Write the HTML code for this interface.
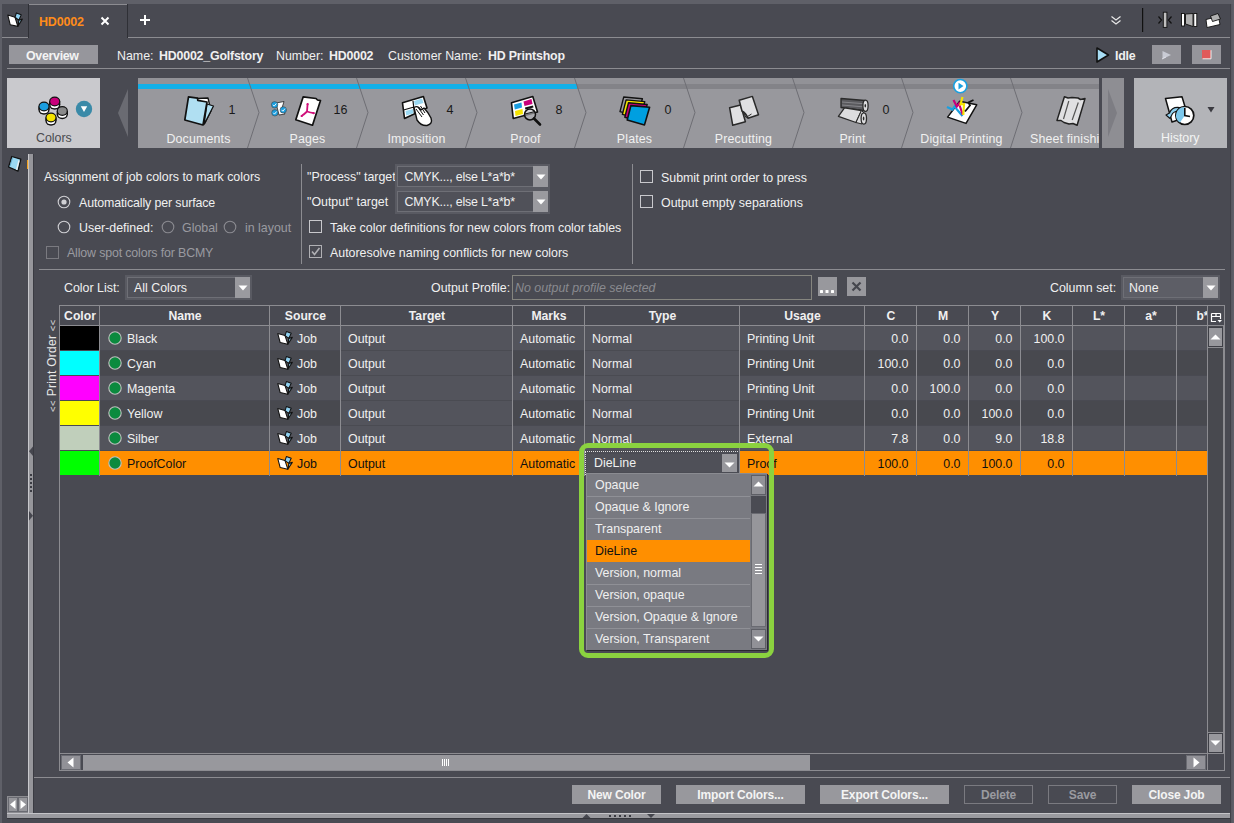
<!DOCTYPE html><html><head><meta charset="utf-8"><style>
html,body{margin:0;padding:0;}
body{width:1234px;height:823px;overflow:hidden;position:relative;background:#494a52;font-family:"Liberation Sans",sans-serif;font-size:12.4px;color:#f0f0f0;}
div{position:absolute;box-sizing:border-box;}
.t{white-space:nowrap;line-height:14px;height:14px;}
.b{font-weight:bold;letter-spacing:-0.15px}
svg{position:absolute;overflow:visible;}

</style></head><body>
<div style="left:0px;top:0px;width:1234px;height:4px;background:#5f6068"></div>
<div style="left:0px;top:0px;width:2px;height:823px;background:#5f6068"></div>
<div style="left:1230px;top:0px;width:4px;height:823px;background:linear-gradient(90deg,#404148 0px,#404148 1px,#55565e 1px,#60616a 4px)"></div>
<div style="left:1230px;top:0px;width:4px;height:4px;background:#5f6068"></div>
<div style="left:2px;top:37px;width:26px;height:1px;background:#8c8c91"></div>
<div style="left:128px;top:37px;width:1102px;height:1px;background:#8c8c91"></div>
<div style="left:29px;top:4px;width:98px;height:1px;background:#8c8c91"></div>
<div style="left:28px;top:4px;width:1px;height:34px;background:#2f3036"></div>
<div style="left:127px;top:4px;width:1px;height:34px;background:#2f3036"></div>
<div class="t" style="left:39px;top:15px;color:#ff8c1a;font-size:12.5px;font-weight:bold;letter-spacing:-0.2px">HD0002</div>
<svg style="left:100px;top:16px" width="10" height="10"><path d="M1.5 1.5L8.5 8.5M8.5 1.5L1.5 8.5" stroke="#fff" stroke-width="2"/></svg>
<svg style="left:139px;top:14px" width="12" height="12"><path d="M6 1V11M1 6H11" stroke="#fff" stroke-width="2"/></svg>
<div style="left:9px;top:45px;width:89px;height:19px;background:#96969c"></div>
<div class="t" style="left:26px;top:49px;font-weight:bold;color:#f4f4f4;letter-spacing:-0.3px">Overview</div>
<div class="t" style="left:117px;top:49px;">Name:</div>
<div class="t" style="left:159px;top:49px;font-weight:bold;letter-spacing:-0.2px">HD0002_Golfstory</div>
<div class="t" style="left:276px;top:49px;">Number:</div>
<div class="t" style="left:329px;top:49px;font-weight:bold;letter-spacing:-0.2px">HD0002</div>
<div class="t" style="left:388px;top:49px;">Customer Name:</div>
<div class="t" style="left:488px;top:49px;font-weight:bold;letter-spacing:-0.2px">HD Printshop</div>
<div style="left:7px;top:68px;width:1223px;height:1px;background:#8c8c91"></div>
<div class="t" style="left:1115px;top:49px;font-weight:bold;letter-spacing:-0.2px">Idle</div>
<div style="left:1152px;top:45px;width:29px;height:19px;background:#95959b"></div>
<div style="left:1192px;top:45px;width:29px;height:19px;background:#95959b"></div>
<div style="left:1202px;top:50px;width:9px;height:9px;background:#e05a5a"></div>
<div style="left:7px;top:78px;width:93px;height:70px;background:#c9c9cd"></div>
<div class="t" style="left:36px;top:131px;color:#4a4a4f">Colors</div>
<div style="left:138px;top:78px;width:961px;height:70px;background:#98989d"></div>
<div style="left:138px;top:78px;width:961px;height:6px;background:#929297"></div>
<div style="left:138px;top:84px;width:439px;height:5px;background:#12b0e8"></div>
<div style="left:577px;top:84px;width:522px;height:5px;background:#838388"></div>
<div class="t" style="left:138px;top:132px;width:121px;text-align:center;color:#f0f0f0;letter-spacing:0.15px">Documents</div>
<div class="t" style="left:247px;top:132px;width:121px;text-align:center;color:#f0f0f0;letter-spacing:0.15px">Pages</div>
<div class="t" style="left:356px;top:132px;width:121px;text-align:center;color:#f0f0f0;letter-spacing:0.15px">Imposition</div>
<div class="t" style="left:465px;top:132px;width:121px;text-align:center;color:#f0f0f0;letter-spacing:0.15px">Proof</div>
<div class="t" style="left:574px;top:132px;width:121px;text-align:center;color:#f0f0f0;letter-spacing:0.15px">Plates</div>
<div class="t" style="left:683px;top:132px;width:121px;text-align:center;color:#f0f0f0;letter-spacing:0.15px">Precutting</div>
<div class="t" style="left:792px;top:132px;width:121px;text-align:center;color:#f0f0f0;letter-spacing:0.15px">Print</div>
<div class="t" style="left:901px;top:132px;width:121px;text-align:center;color:#f0f0f0;letter-spacing:0.15px">Digital Printing</div>
<div class="t" style="left:1030px;top:132px;width:100px;color:#f0f0f0;letter-spacing:0.15px">Sheet finishi</div>
<svg style="left:0;top:0" width="1234" height="823"><path d="M247.5 78L259.0 112.5L247.5 148M356.5 78L368.0 112.5L356.5 148M465.5 78L477.0 112.5L465.5 148M574.5 78L586.0 112.5L574.5 148M683.5 78L695.0 112.5L683.5 148M792.5 78L804.0 112.5L792.5 148M901.5 78L913.0 112.5L901.5 148M1010.5 78L1022.0 112.5L1010.5 148" fill="none" stroke="#6e6e74" stroke-width="1"/></svg>
<div style="left:1102px;top:78px;width:22px;height:70px;background:#8e8e93"></div>
<svg style="left:0;top:0" width="1234" height="823"><path d="M1108 89L1117 113L1108 137Z" fill="#7d7d83"/><path d="M128 89L118 113L128 137Z" fill="#6a6b72"/></svg>
<div style="left:1134px;top:78px;width:93px;height:70px;background:#b3b4b8"></div>
<div class="t" style="left:1161px;top:131px;color:#f4f4f4">History</div>
<div style="left:28px;top:154px;width:5px;height:659px;background:#96969b;border-left:1px solid #c8c8cc"></div>
<div style="left:33px;top:154px;width:1px;height:659px;background:#3a3b42"></div>
<svg style="left:0;top:0" width="1234" height="823"><path d="M33 446.5V456L29 451.3Z" fill="#45464e"/><path d="M29 511V520.5L33 515.8Z" fill="#45464e"/><path d="M30 474h2v2h-2zM30 478h2v2h-2zM30 482h2v2h-2zM30 486h2v2h-2zM30 490h2v2h-2z" fill="#3a3b42"/></svg>
<div class="t" style="left:44px;top:170px;">Assignment of job colors to mark colors</div>
<div class="t" style="left:79px;top:196px;letter-spacing:-0.12px">Automatically per surface</div>
<div class="t" style="left:79px;top:221px;">User-defined:</div>
<div class="t" style="left:182px;top:221px;color:#9a9aa0">Global</div>
<div class="t" style="left:245px;top:221px;color:#9a9aa0">in layout</div>
<div class="t" style="left:67px;top:246px;color:#9a9aa0;letter-spacing:-0.15px">Allow spot colors for BCMY</div>
<div style="left:301px;top:164px;width:1px;height:100px;background:#8c8c91"></div>
<div class="t" style="left:307px;top:170px;">"Process" target</div>
<div class="t" style="left:307px;top:195px;">"Output" target</div>
<div class="t" style="left:330px;top:221px;">Take color definitions for new colors from color tables</div>
<div class="t" style="left:330px;top:246px;">Autoresolve naming conflicts for new colors</div>
<div style="left:632px;top:164px;width:1px;height:100px;background:#8c8c91"></div>
<div class="t" style="left:661px;top:171px;">Submit print order to press</div>
<div class="t" style="left:661px;top:196px;">Output empty separations</div>
<div style="left:39px;top:269px;width:1186px;height:1px;background:#8c8c91"></div>
<div class="t" style="left:64px;top:281px;">Color List:</div>
<div class="t" style="left:431px;top:281px;">Output Profile:</div>
<div class="t" style="left:1050px;top:281px;">Column set:</div>
<div style="left:34px;top:777px;width:1196px;height:1px;background:#8c8c91"></div>
<div style="left:7px;top:813px;width:1223px;height:5px;background:#9a9a9f;border-top:1px solid #c4c4c8"></div>
<svg style="left:57px;top:195px" width="14" height="14"><circle cx="7" cy="7" r="5.8" fill="none" stroke="#d0d0d4" stroke-width="1.1"/><circle cx="7" cy="7" r="2.6" fill="#d0d0d4"/></svg>
<svg style="left:57px;top:220px" width="14" height="14"><circle cx="7" cy="7" r="5.8" fill="none" stroke="#d0d0d4" stroke-width="1.1"/></svg>
<svg style="left:161px;top:220px" width="14" height="14"><circle cx="7" cy="7" r="5.8" fill="none" stroke="#8a8a90" stroke-width="1.1"/></svg>
<svg style="left:223px;top:220px" width="14" height="14"><circle cx="7" cy="7" r="5.8" fill="none" stroke="#8a8a90" stroke-width="1.1"/></svg>
<svg style="left:46px;top:246px" width="14" height="14"><rect x="0.5" y="0.5" width="12" height="12" fill="none" stroke="#7a7a80" stroke-width="1"/></svg>
<svg style="left:309px;top:220px" width="14" height="14"><rect x="0.5" y="0.5" width="12" height="12" fill="none" stroke="#c8c8cc" stroke-width="1"/></svg>
<svg style="left:309px;top:245px" width="14" height="14"><rect x="0.5" y="0.5" width="12" height="12" fill="none" stroke="#b0b0b4" stroke-width="1"/><path d="M3 6.5L5.5 9.5L10.5 3" fill="none" stroke="#b0b0b4" stroke-width="1.6"/></svg>
<svg style="left:640px;top:170px" width="14" height="14"><rect x="0.5" y="0.5" width="12" height="12" fill="none" stroke="#c8c8cc" stroke-width="1"/></svg>
<svg style="left:640px;top:195px" width="14" height="14"><rect x="0.5" y="0.5" width="12" height="12" fill="none" stroke="#c8c8cc" stroke-width="1"/></svg>
<div style="left:395px;top:164px;width:155px;height:50px;background:#595a62"></div>
<div style="left:397px;top:166px;width:151px;height:21px;background:#505159;border:1px solid #6e6f76"></div>
<div style="left:533px;top:166px;width:15px;height:21px;background:#9a9a9f"></div>
<svg style="left:535.5px;top:173.5px" width="10" height="6"><path d="M0.5 0.5H9.5L5 5.5Z" fill="#fff"/></svg>
<div class="t" style="left:404.5px;top:170px;letter-spacing:-0.2px">CMYK..., else L*a*b*</div>
<div style="left:397px;top:191px;width:151px;height:21px;background:#505159;border:1px solid #6e6f76"></div>
<div style="left:533px;top:191px;width:15px;height:21px;background:#9a9a9f"></div>
<svg style="left:535.5px;top:198.5px" width="10" height="6"><path d="M0.5 0.5H9.5L5 5.5Z" fill="#fff"/></svg>
<div class="t" style="left:404.5px;top:195px;letter-spacing:-0.2px">CMYK..., else L*a*b*</div>
<div style="left:125px;top:275px;width:127px;height:25px;background:#595a62"></div>
<div style="left:127px;top:277px;width:123px;height:21px;background:#505159;border:1px solid #6e6f76"></div>
<div style="left:235px;top:277px;width:15px;height:21px;background:#9a9a9f"></div>
<svg style="left:237.5px;top:284.5px" width="10" height="6"><path d="M0.5 0.5H9.5L5 5.5Z" fill="#fff"/></svg>
<div class="t" style="left:134px;top:281px;">All Colors</div>
<div style="left:1121px;top:275px;width:99px;height:25px;background:#595a62"></div>
<div style="left:1123px;top:277px;width:95px;height:21px;background:#5d5e66;border:1px solid #6e6f76"></div>
<div style="left:1203px;top:277px;width:15px;height:21px;background:#9a9a9f"></div>
<svg style="left:1205.5px;top:284.5px" width="10" height="6"><path d="M0.5 0.5H9.5L5 5.5Z" fill="#fff"/></svg>
<div class="t" style="left:1129px;top:281px;">None</div>
<div style="left:512px;top:275px;width:300px;height:25px;border:1px solid #85857f"></div>
<div class="t" style="left:515px;top:281px;font-style:italic;color:#8a8a90">No output profile selected</div>
<div style="left:818px;top:277px;width:19px;height:19px;background:#98989d"></div>
<svg style="left:818px;top:277px" width="19" height="19"><rect x="2" y="13" width="3" height="3" rx="0.6" fill="#fff"/><rect x="7.5" y="13" width="3" height="3" rx="0.6" fill="#fff"/><rect x="13" y="13" width="3" height="3" rx="0.6" fill="#fff"/></svg>
<div style="left:847px;top:277px;width:19px;height:19px;background:#98989d"></div>
<svg style="left:847px;top:277px" width="19" height="19"><path d="M5.5 5.5L13.5 13.5M13.5 5.5L5.5 13.5" stroke="#45464e" stroke-width="2.2"/></svg>
<div style="left:59px;top:305px;width:1166px;height:466px;border:1px solid #8c8c91"></div>
<div class="t b" style="left:60px;top:309px;width:40px;text-align:center;font-size:12.2px;letter-spacing:0px;overflow:hidden">Color</div>
<div class="t b" style="left:100px;top:309px;width:170px;text-align:center;font-size:12.2px;letter-spacing:0px;overflow:hidden">Name</div>
<div class="t b" style="left:270px;top:309px;width:71px;text-align:center;font-size:12.2px;letter-spacing:0px;overflow:hidden">Source</div>
<div class="t b" style="left:341px;top:309px;width:172px;text-align:center;font-size:12.2px;letter-spacing:0px;overflow:hidden">Target</div>
<div class="t b" style="left:513px;top:309px;width:72px;text-align:center;font-size:12.2px;letter-spacing:0px;overflow:hidden">Marks</div>
<div class="t b" style="left:585px;top:309px;width:155px;text-align:center;font-size:12.2px;letter-spacing:0px;overflow:hidden">Type</div>
<div class="t b" style="left:740px;top:309px;width:125px;text-align:center;font-size:12.2px;letter-spacing:0px;overflow:hidden">Usage</div>
<div class="t b" style="left:865px;top:309px;width:52px;text-align:center;font-size:12.2px;letter-spacing:0px;overflow:hidden">C</div>
<div class="t b" style="left:917px;top:309px;width:52px;text-align:center;font-size:12.2px;letter-spacing:0px;overflow:hidden">M</div>
<div class="t b" style="left:969px;top:309px;width:52px;text-align:center;font-size:12.2px;letter-spacing:0px;overflow:hidden">Y</div>
<div class="t b" style="left:1021px;top:309px;width:52px;text-align:center;font-size:12.2px;letter-spacing:0px;overflow:hidden">K</div>
<div class="t b" style="left:1073px;top:309px;width:52px;text-align:center;font-size:12.2px;letter-spacing:0px;overflow:hidden">L*</div>
<div class="t b" style="left:1125px;top:309px;width:52px;text-align:center;font-size:12.2px;letter-spacing:0px;overflow:hidden">a*</div>
<div style="left:1176px;top:309px;width:31px;height:15px;overflow:hidden"><div class="t b" style="left:20.5px;top:0px;font-size:12px">b*</div></div>
<svg style="left:1210px;top:312px" width="13" height="12"><path d="M1.5 1.5H10.5M1.5 4.5H10.5M1.5 1.5V9.5H6M6 1.5V4.5M10.5 1.5V7" fill="none" stroke="#fff" stroke-width="1.2"/><path d="M7.5 8H12L9.75 10.5Z" fill="#fff"/></svg>
<div style="left:60px;top:325px;width:1164px;height:1px;background:#8c8c91"></div>
<div style="left:100px;top:326px;width:169px;height:24px;background:#53545c"></div>
<div style="left:270px;top:326px;width:70px;height:24px;background:#53545c"></div>
<div style="left:341px;top:326px;width:171px;height:24px;background:#53545c"></div>
<div style="left:341px;top:350px;width:171px;height:1px;background:#4a4b52"></div>
<div style="left:513px;top:326px;width:71px;height:24px;background:#53545c"></div>
<div style="left:585px;top:326px;width:154px;height:24px;background:#53545c"></div>
<div style="left:585px;top:350px;width:154px;height:1px;background:#4a4b52"></div>
<div style="left:740px;top:326px;width:124px;height:24px;background:#53545c"></div>
<div style="left:865px;top:326px;width:51px;height:24px;background:#53545c"></div>
<div style="left:917px;top:326px;width:51px;height:24px;background:#53545c"></div>
<div style="left:969px;top:326px;width:51px;height:24px;background:#53545c"></div>
<div style="left:1021px;top:326px;width:51px;height:24px;background:#53545c"></div>
<div style="left:1073px;top:326px;width:51px;height:24px;background:#53545c"></div>
<div style="left:1125px;top:326px;width:51px;height:24px;background:#53545c"></div>
<div style="left:1177px;top:326px;width:30px;height:24px;background:#53545c"></div>
<div style="left:60px;top:326px;width:39px;height:24px;background:#000000"></div>
<svg style="left:108px;top:331px" width="14" height="14"><circle cx="7" cy="7" r="6.2" fill="#0b8a3e" stroke="#c0c0c0" stroke-width="1.1"/></svg>
<div class="t" style="left:127px;top:332px;color:#f0f0f0">Black</div>
<div class="t" style="left:297px;top:332px;color:#f0f0f0">Job</div>
<div class="t" style="left:348px;top:332px;color:#f0f0f0">Output</div>
<div class="t" style="left:520px;top:332px;color:#f0f0f0">Automatic</div>
<div class="t" style="left:592px;top:332px;color:#f0f0f0">Normal</div>
<div class="t" style="left:747px;top:332px;color:#f0f0f0">Printing Unit</div>
<div class="t" style="left:856px;top:332px;width:52.5px;text-align:right;color:#f0f0f0">0.0</div>
<div class="t" style="left:908px;top:332px;width:52.5px;text-align:right;color:#f0f0f0">0.0</div>
<div class="t" style="left:960px;top:332px;width:52.5px;text-align:right;color:#f0f0f0">0.0</div>
<div class="t" style="left:1012px;top:332px;width:52.5px;text-align:right;color:#f0f0f0">100.0</div>
<div style="left:100px;top:351px;width:169px;height:24px;background:#48494f"></div>
<div style="left:270px;top:351px;width:70px;height:24px;background:#48494f"></div>
<div style="left:341px;top:351px;width:171px;height:24px;background:#53545c"></div>
<div style="left:341px;top:375px;width:171px;height:1px;background:#4a4b52"></div>
<div style="left:513px;top:351px;width:71px;height:24px;background:#48494f"></div>
<div style="left:585px;top:351px;width:154px;height:24px;background:#53545c"></div>
<div style="left:585px;top:375px;width:154px;height:1px;background:#4a4b52"></div>
<div style="left:740px;top:351px;width:124px;height:24px;background:#48494f"></div>
<div style="left:865px;top:351px;width:51px;height:24px;background:#48494f"></div>
<div style="left:917px;top:351px;width:51px;height:24px;background:#48494f"></div>
<div style="left:969px;top:351px;width:51px;height:24px;background:#48494f"></div>
<div style="left:1021px;top:351px;width:51px;height:24px;background:#48494f"></div>
<div style="left:1073px;top:351px;width:51px;height:24px;background:#48494f"></div>
<div style="left:1125px;top:351px;width:51px;height:24px;background:#48494f"></div>
<div style="left:1177px;top:351px;width:30px;height:24px;background:#48494f"></div>
<div style="left:60px;top:351px;width:39px;height:24px;background:#00ffff"></div>
<svg style="left:108px;top:356px" width="14" height="14"><circle cx="7" cy="7" r="6.2" fill="#0b8a3e" stroke="#c0c0c0" stroke-width="1.1"/></svg>
<div class="t" style="left:127px;top:357px;color:#f0f0f0">Cyan</div>
<div class="t" style="left:297px;top:357px;color:#f0f0f0">Job</div>
<div class="t" style="left:348px;top:357px;color:#f0f0f0">Output</div>
<div class="t" style="left:520px;top:357px;color:#f0f0f0">Automatic</div>
<div class="t" style="left:592px;top:357px;color:#f0f0f0">Normal</div>
<div class="t" style="left:747px;top:357px;color:#f0f0f0">Printing Unit</div>
<div class="t" style="left:856px;top:357px;width:52.5px;text-align:right;color:#f0f0f0">100.0</div>
<div class="t" style="left:908px;top:357px;width:52.5px;text-align:right;color:#f0f0f0">0.0</div>
<div class="t" style="left:960px;top:357px;width:52.5px;text-align:right;color:#f0f0f0">0.0</div>
<div class="t" style="left:1012px;top:357px;width:52.5px;text-align:right;color:#f0f0f0">0.0</div>
<div style="left:100px;top:376px;width:169px;height:24px;background:#53545c"></div>
<div style="left:270px;top:376px;width:70px;height:24px;background:#53545c"></div>
<div style="left:341px;top:376px;width:171px;height:24px;background:#53545c"></div>
<div style="left:341px;top:400px;width:171px;height:1px;background:#4a4b52"></div>
<div style="left:513px;top:376px;width:71px;height:24px;background:#53545c"></div>
<div style="left:585px;top:376px;width:154px;height:24px;background:#53545c"></div>
<div style="left:585px;top:400px;width:154px;height:1px;background:#4a4b52"></div>
<div style="left:740px;top:376px;width:124px;height:24px;background:#53545c"></div>
<div style="left:865px;top:376px;width:51px;height:24px;background:#53545c"></div>
<div style="left:917px;top:376px;width:51px;height:24px;background:#53545c"></div>
<div style="left:969px;top:376px;width:51px;height:24px;background:#53545c"></div>
<div style="left:1021px;top:376px;width:51px;height:24px;background:#53545c"></div>
<div style="left:1073px;top:376px;width:51px;height:24px;background:#53545c"></div>
<div style="left:1125px;top:376px;width:51px;height:24px;background:#53545c"></div>
<div style="left:1177px;top:376px;width:30px;height:24px;background:#53545c"></div>
<div style="left:60px;top:376px;width:39px;height:24px;background:#ff00ff"></div>
<svg style="left:108px;top:381px" width="14" height="14"><circle cx="7" cy="7" r="6.2" fill="#0b8a3e" stroke="#c0c0c0" stroke-width="1.1"/></svg>
<div class="t" style="left:127px;top:382px;color:#f0f0f0">Magenta</div>
<div class="t" style="left:297px;top:382px;color:#f0f0f0">Job</div>
<div class="t" style="left:348px;top:382px;color:#f0f0f0">Output</div>
<div class="t" style="left:520px;top:382px;color:#f0f0f0">Automatic</div>
<div class="t" style="left:592px;top:382px;color:#f0f0f0">Normal</div>
<div class="t" style="left:747px;top:382px;color:#f0f0f0">Printing Unit</div>
<div class="t" style="left:856px;top:382px;width:52.5px;text-align:right;color:#f0f0f0">0.0</div>
<div class="t" style="left:908px;top:382px;width:52.5px;text-align:right;color:#f0f0f0">100.0</div>
<div class="t" style="left:960px;top:382px;width:52.5px;text-align:right;color:#f0f0f0">0.0</div>
<div class="t" style="left:1012px;top:382px;width:52.5px;text-align:right;color:#f0f0f0">0.0</div>
<div style="left:100px;top:401px;width:169px;height:24px;background:#48494f"></div>
<div style="left:270px;top:401px;width:70px;height:24px;background:#48494f"></div>
<div style="left:341px;top:401px;width:171px;height:24px;background:#53545c"></div>
<div style="left:341px;top:425px;width:171px;height:1px;background:#4a4b52"></div>
<div style="left:513px;top:401px;width:71px;height:24px;background:#48494f"></div>
<div style="left:585px;top:401px;width:154px;height:24px;background:#53545c"></div>
<div style="left:585px;top:425px;width:154px;height:1px;background:#4a4b52"></div>
<div style="left:740px;top:401px;width:124px;height:24px;background:#48494f"></div>
<div style="left:865px;top:401px;width:51px;height:24px;background:#48494f"></div>
<div style="left:917px;top:401px;width:51px;height:24px;background:#48494f"></div>
<div style="left:969px;top:401px;width:51px;height:24px;background:#48494f"></div>
<div style="left:1021px;top:401px;width:51px;height:24px;background:#48494f"></div>
<div style="left:1073px;top:401px;width:51px;height:24px;background:#48494f"></div>
<div style="left:1125px;top:401px;width:51px;height:24px;background:#48494f"></div>
<div style="left:1177px;top:401px;width:30px;height:24px;background:#48494f"></div>
<div style="left:60px;top:401px;width:39px;height:24px;background:#ffff00"></div>
<svg style="left:108px;top:406px" width="14" height="14"><circle cx="7" cy="7" r="6.2" fill="#0b8a3e" stroke="#c0c0c0" stroke-width="1.1"/></svg>
<div class="t" style="left:127px;top:407px;color:#f0f0f0">Yellow</div>
<div class="t" style="left:297px;top:407px;color:#f0f0f0">Job</div>
<div class="t" style="left:348px;top:407px;color:#f0f0f0">Output</div>
<div class="t" style="left:520px;top:407px;color:#f0f0f0">Automatic</div>
<div class="t" style="left:592px;top:407px;color:#f0f0f0">Normal</div>
<div class="t" style="left:747px;top:407px;color:#f0f0f0">Printing Unit</div>
<div class="t" style="left:856px;top:407px;width:52.5px;text-align:right;color:#f0f0f0">0.0</div>
<div class="t" style="left:908px;top:407px;width:52.5px;text-align:right;color:#f0f0f0">0.0</div>
<div class="t" style="left:960px;top:407px;width:52.5px;text-align:right;color:#f0f0f0">100.0</div>
<div class="t" style="left:1012px;top:407px;width:52.5px;text-align:right;color:#f0f0f0">0.0</div>
<div style="left:100px;top:426px;width:169px;height:24px;background:#53545c"></div>
<div style="left:270px;top:426px;width:70px;height:24px;background:#53545c"></div>
<div style="left:341px;top:426px;width:171px;height:24px;background:#53545c"></div>
<div style="left:341px;top:450px;width:171px;height:1px;background:#4a4b52"></div>
<div style="left:513px;top:426px;width:71px;height:24px;background:#53545c"></div>
<div style="left:585px;top:426px;width:154px;height:24px;background:#53545c"></div>
<div style="left:585px;top:450px;width:154px;height:1px;background:#4a4b52"></div>
<div style="left:740px;top:426px;width:124px;height:24px;background:#53545c"></div>
<div style="left:865px;top:426px;width:51px;height:24px;background:#53545c"></div>
<div style="left:917px;top:426px;width:51px;height:24px;background:#53545c"></div>
<div style="left:969px;top:426px;width:51px;height:24px;background:#53545c"></div>
<div style="left:1021px;top:426px;width:51px;height:24px;background:#53545c"></div>
<div style="left:1073px;top:426px;width:51px;height:24px;background:#53545c"></div>
<div style="left:1125px;top:426px;width:51px;height:24px;background:#53545c"></div>
<div style="left:1177px;top:426px;width:30px;height:24px;background:#53545c"></div>
<div style="left:60px;top:426px;width:39px;height:24px;background:#c0cfbb"></div>
<svg style="left:108px;top:431px" width="14" height="14"><circle cx="7" cy="7" r="6.2" fill="#0b8a3e" stroke="#c0c0c0" stroke-width="1.1"/></svg>
<div class="t" style="left:127px;top:432px;color:#f0f0f0">Silber</div>
<div class="t" style="left:297px;top:432px;color:#f0f0f0">Job</div>
<div class="t" style="left:348px;top:432px;color:#f0f0f0">Output</div>
<div class="t" style="left:520px;top:432px;color:#f0f0f0">Automatic</div>
<div class="t" style="left:592px;top:432px;color:#f0f0f0">Normal</div>
<div class="t" style="left:747px;top:432px;color:#f0f0f0">External</div>
<div class="t" style="left:856px;top:432px;width:52.5px;text-align:right;color:#f0f0f0">7.8</div>
<div class="t" style="left:908px;top:432px;width:52.5px;text-align:right;color:#f0f0f0">0.0</div>
<div class="t" style="left:960px;top:432px;width:52.5px;text-align:right;color:#f0f0f0">9.0</div>
<div class="t" style="left:1012px;top:432px;width:52.5px;text-align:right;color:#f0f0f0">18.8</div>
<div style="left:100px;top:451px;width:169px;height:24px;background:#ff8f00"></div>
<div style="left:270px;top:451px;width:70px;height:24px;background:#ff8f00"></div>
<div style="left:341px;top:451px;width:171px;height:24px;background:#ff8f00"></div>
<div style="left:513px;top:451px;width:71px;height:24px;background:#ff8f00"></div>
<div style="left:585px;top:451px;width:154px;height:24px;background:#4b4c54"></div>
<div style="left:740px;top:451px;width:124px;height:24px;background:#ff8f00"></div>
<div style="left:865px;top:451px;width:51px;height:24px;background:#ff8f00"></div>
<div style="left:917px;top:451px;width:51px;height:24px;background:#ff8f00"></div>
<div style="left:969px;top:451px;width:51px;height:24px;background:#ff8f00"></div>
<div style="left:1021px;top:451px;width:51px;height:24px;background:#ff8f00"></div>
<div style="left:1073px;top:451px;width:51px;height:24px;background:#ff8f00"></div>
<div style="left:1125px;top:451px;width:51px;height:24px;background:#ff8f00"></div>
<div style="left:1177px;top:451px;width:30px;height:24px;background:#ff8f00"></div>
<div style="left:60px;top:451px;width:39px;height:24px;background:#00ff00"></div>
<svg style="left:108px;top:456px" width="14" height="14"><circle cx="7" cy="7" r="6.2" fill="#0b8a3e" stroke="#c0c0c0" stroke-width="1.1"/></svg>
<div class="t" style="left:127px;top:457px;color:#101010">ProofColor</div>
<div class="t" style="left:297px;top:457px;color:#101010">Job</div>
<div class="t" style="left:348px;top:457px;color:#101010">Output</div>
<div class="t" style="left:520px;top:457px;color:#101010">Automatic</div>
<div class="t" style="left:747px;top:457px;color:#101010">Proof</div>
<div class="t" style="left:856px;top:457px;width:52.5px;text-align:right;color:#101010">100.0</div>
<div class="t" style="left:908px;top:457px;width:52.5px;text-align:right;color:#101010">0.0</div>
<div class="t" style="left:960px;top:457px;width:52.5px;text-align:right;color:#101010">100.0</div>
<div class="t" style="left:1012px;top:457px;width:52.5px;text-align:right;color:#101010">0.0</div>
<div style="left:99px;top:306px;width:1px;height:170px;background:#8c8c91"></div>
<div style="left:269px;top:306px;width:1px;height:170px;background:#8c8c91"></div>
<div style="left:340px;top:306px;width:1px;height:170px;background:#8c8c91"></div>
<div style="left:512px;top:306px;width:1px;height:170px;background:#8c8c91"></div>
<div style="left:584px;top:306px;width:1px;height:170px;background:#8c8c91"></div>
<div style="left:739px;top:306px;width:1px;height:170px;background:#8c8c91"></div>
<div style="left:864px;top:306px;width:1px;height:170px;background:#8c8c91"></div>
<div style="left:916px;top:306px;width:1px;height:170px;background:#8c8c91"></div>
<div style="left:968px;top:306px;width:1px;height:170px;background:#8c8c91"></div>
<div style="left:1020px;top:306px;width:1px;height:170px;background:#8c8c91"></div>
<div style="left:1072px;top:306px;width:1px;height:170px;background:#8c8c91"></div>
<div style="left:1124px;top:306px;width:1px;height:170px;background:#8c8c91"></div>
<div style="left:1176px;top:306px;width:1px;height:170px;background:#8c8c91"></div>
<div style="left:1207px;top:306px;width:1px;height:464px;background:#8c8c91"></div>
<div style="left:1207px;top:326px;width:18px;height:428px;background:#48494f;border-left:1px solid #8c8c91;border-right:2px solid #8c8c91"></div>
<div style="left:1208px;top:347px;width:15px;height:1px;background:#8c8c91"></div>
<div style="left:1208px;top:732px;width:15px;height:1px;background:#8c8c91"></div>
<div style="left:1208px;top:327px;width:15px;height:20px;background:#98989d;border:1px solid #3e3f46"></div>
<svg style="left:1210px;top:334px" width="11" height="6"><path d="M0.5 5.5H10.5L5.5 0.5Z" fill="#fff"/></svg>
<div style="left:1208px;top:733px;width:15px;height:20px;background:#98989d;border:1px solid #3e3f46"></div>
<svg style="left:1210px;top:740px" width="11" height="6"><path d="M0.5 0.5H10.5L5.5 5.5Z" fill="#fff"/></svg>
<div style="left:1207px;top:753px;width:18px;height:18px;border:1px solid #8c8c91"></div>
<div style="left:59px;top:753px;width:1149px;height:18px;border:1px solid #8c8c91"></div>
<div style="left:61px;top:755px;width:20px;height:15px;background:#919197;border:1px solid #6a6b72"></div>
<svg style="left:67px;top:757px" width="7" height="11"><path d="M6.5 0.5V10.5L0.5 5.5Z" fill="#fff"/></svg>
<div style="left:83px;top:755px;width:727px;height:15px;background:#98989d"></div>
<svg style="left:441px;top:758px" width="10" height="9"><path d="M1.5 1V8M3.5 1V8M5.5 1V8M7.5 1V8" stroke="#fff" stroke-width="1"/></svg>
<div style="left:1186px;top:755px;width:20px;height:15px;background:#919197;border:1px solid #6a6b72"></div>
<svg style="left:1193px;top:757px" width="7" height="11"><path d="M0.5 0.5V10.5L6.5 5.5Z" fill="#fff"/></svg>
<div style="left:572px;top:785px;width:89px;height:19px;background:#98989d"></div>
<div class="t b" style="left:572px;top:788px;width:89px;text-align:center;color:#f4f4f4;font-size:12px">New Color</div>
<div style="left:676px;top:785px;width:129px;height:19px;background:#98989d"></div>
<div class="t b" style="left:676px;top:788px;width:129px;text-align:center;color:#f4f4f4;font-size:12px">Import Colors...</div>
<div style="left:820px;top:785px;width:129px;height:19px;background:#98989d"></div>
<div class="t b" style="left:820px;top:788px;width:129px;text-align:center;color:#f4f4f4;font-size:12px">Export Colors...</div>
<div style="left:964px;top:785px;width:69px;height:19px;border:1px solid #7a7a80"></div>
<div class="t b" style="left:964px;top:788px;width:69px;text-align:center;color:#9a9aa0;font-size:12px">Delete</div>
<div style="left:1048px;top:785px;width:69px;height:19px;border:1px solid #7a7a80"></div>
<div class="t b" style="left:1048px;top:788px;width:69px;text-align:center;color:#9a9aa0;font-size:12px">Save</div>
<div style="left:1132px;top:785px;width:89px;height:19px;background:#98989d"></div>
<div class="t b" style="left:1132px;top:788px;width:89px;text-align:center;color:#f4f4f4;font-size:12px">Close Job</div>
<div style="left:7px;top:796px;width:21px;height:17px;background:#8c8c91"></div>
<div style="left:8px;top:797px;width:10px;height:15px;background:#96969b;border:1px solid #6a6b72"></div>
<div style="left:18px;top:797px;width:10px;height:15px;background:#96969b;border:1px solid #6a6b72"></div>
<svg style="left:0;top:0" width="1234" height="823"><path d="M15.5 800V809L10 804.5Z" fill="#fff"/><path d="M20.5 800V809L26 804.5Z" fill="#fff"/></svg>
<div style="left:7px;top:818px;width:1223px;height:1px;background:#35363c"></div>
<svg style="left:0;top:0" width="1234" height="823"><path d="M582.5 818L586.5 814L590.5 818Z" fill="#45464e"/><path d="M647 814H655L651 818Z" fill="#45464e"/><path d="M609 815h2v2h-2zM614 815h2v2h-2zM619 815h2v2h-2zM624 815h2v2h-2zM629 815h2v2h-2z" fill="#3a3b42"/></svg>
<div class="t" style="left:5.5px;top:359px;width:92px;text-align:center;transform:rotate(-90deg);font-size:12px;letter-spacing:0.25px;color:#e8e8e8"><span style="font-size:9.5px;letter-spacing:0.5px">&lt;&lt;</span> Print Order <span style="font-size:9.5px;letter-spacing:0.5px">&lt;&lt;</span></div>
<div style="left:579px;top:443px;width:195px;height:215px;border:5px solid #8bd23f;border-radius:9px"></div>
<div style="left:585px;top:451px;width:153px;height:24px;border:1px dotted #e0e0e0;border-right:none;border-bottom:none"></div>
<div style="left:587px;top:454px;width:135px;height:18px;background:#4f5058"></div>
<div style="left:722px;top:454px;width:15px;height:18px;background:#98989d"></div>
<svg style="left:724px;top:462px" width="11" height="6"><path d="M0.5 0.5H10.5L5.5 5.5Z" fill="#fff"/></svg>
<div class="t" style="left:594px;top:456px;">DieLine</div>
<div style="left:586px;top:473px;width:181px;height:177px;background:#8a8b91"></div>
<div style="left:767px;top:474px;width:1px;height:177px;background:#2a2b30"></div>
<div style="left:587px;top:650px;width:181px;height:1px;background:#2a2b30"></div>
<div style="left:587px;top:474px;width:163px;height:22px;background:#797a81"></div>
<div class="t" style="left:595px;top:478px;color:#f0f0f0">Opaque</div>
<div style="left:587px;top:496px;width:163px;height:22px;background:#797a81"></div>
<div style="left:587px;top:496px;width:163px;height:1px;background:#8f9096"></div>
<div class="t" style="left:595px;top:500px;color:#f0f0f0">Opaque &amp; Ignore</div>
<div style="left:587px;top:518px;width:163px;height:22px;background:#797a81"></div>
<div style="left:587px;top:518px;width:163px;height:1px;background:#8f9096"></div>
<div class="t" style="left:595px;top:522px;color:#f0f0f0">Transparent</div>
<div style="left:587px;top:540px;width:163px;height:22px;background:#ff8f00"></div>
<div class="t" style="left:595px;top:544px;color:#101010">DieLine</div>
<div style="left:587px;top:562px;width:163px;height:22px;background:#797a81"></div>
<div class="t" style="left:595px;top:566px;color:#f0f0f0">Version, normal</div>
<div style="left:587px;top:584px;width:163px;height:22px;background:#797a81"></div>
<div style="left:587px;top:584px;width:163px;height:1px;background:#8f9096"></div>
<div class="t" style="left:595px;top:588px;color:#f0f0f0">Version, opaque</div>
<div style="left:587px;top:606px;width:163px;height:22px;background:#797a81"></div>
<div style="left:587px;top:606px;width:163px;height:1px;background:#8f9096"></div>
<div class="t" style="left:595px;top:610px;color:#f0f0f0">Version, Opaque &amp; Ignore</div>
<div style="left:587px;top:628px;width:163px;height:22px;background:#797a81"></div>
<div style="left:587px;top:628px;width:163px;height:1px;background:#8f9096"></div>
<div class="t" style="left:595px;top:632px;color:#f0f0f0">Version, Transparent</div>
<div style="left:750px;top:474px;width:17px;height:176px;background:#797a81"></div>
<div style="left:751px;top:475px;width:15px;height:20px;background:#919197;border:1px solid #5e5f66"></div>
<svg style="left:753px;top:481px" width="11" height="6"><path d="M0.5 5.5H10.5L5.5 0.5Z" fill="#fff"/></svg>
<div style="left:751px;top:496px;width:15px;height:17px;background:#4a4b53"></div>
<div style="left:751px;top:513px;width:15px;height:114px;background:#96969b;border:1px solid #6a6b72"></div>
<svg style="left:754px;top:563px" width="9" height="11"><path d="M1 1.5H8M1 4.5H8M1 7.5H8M1 10.5H8" stroke="#fff" stroke-width="1"/></svg>
<div style="left:751px;top:629px;width:15px;height:20px;background:#919197;border:1px solid #5e5f66"></div>
<svg style="left:753px;top:636px" width="11" height="6"><path d="M0.5 0.5H10.5L5.5 5.5Z" fill="#fff"/></svg>
<svg style="left:0;top:0" width="1234" height="823"><g transform="translate(7,12.3) scale(1.0,1.07)"><g transform="translate(0,0)"><path d="M0.8 2.6L8 4.6L10.8 13.2L3.2 11.6Z" fill="#fff" stroke="#111" stroke-width="1.05" stroke-linejoin="round"/><path d="M8 4.6L9.4 0.6L14.2 2.3L11.9 7.4Z" fill="#8fd0f0" stroke="#111" stroke-width="1.05" stroke-linejoin="round"/><path d="M11.9 7.4L15.3 6.4L10.8 13.2Z" fill="#8fd0f0" stroke="#111" stroke-width="1.1" stroke-linejoin="round"/></g></g><g transform="translate(277,331)"><path d="M0.8 2.6L8 4.6L10.8 13.2L3.2 11.6Z" fill="#fff" stroke="#111" stroke-width="1.05" stroke-linejoin="round"/><path d="M8 4.6L9.4 0.6L14.2 2.3L11.9 7.4Z" fill="#8fd0f0" stroke="#111" stroke-width="1.05" stroke-linejoin="round"/><path d="M11.9 7.4L15.3 6.4L10.8 13.2Z" fill="#8fd0f0" stroke="#111" stroke-width="1.1" stroke-linejoin="round"/></g><g transform="translate(277,356)"><path d="M0.8 2.6L8 4.6L10.8 13.2L3.2 11.6Z" fill="#fff" stroke="#111" stroke-width="1.05" stroke-linejoin="round"/><path d="M8 4.6L9.4 0.6L14.2 2.3L11.9 7.4Z" fill="#8fd0f0" stroke="#111" stroke-width="1.05" stroke-linejoin="round"/><path d="M11.9 7.4L15.3 6.4L10.8 13.2Z" fill="#8fd0f0" stroke="#111" stroke-width="1.1" stroke-linejoin="round"/></g><g transform="translate(277,381)"><path d="M0.8 2.6L8 4.6L10.8 13.2L3.2 11.6Z" fill="#fff" stroke="#111" stroke-width="1.05" stroke-linejoin="round"/><path d="M8 4.6L9.4 0.6L14.2 2.3L11.9 7.4Z" fill="#8fd0f0" stroke="#111" stroke-width="1.05" stroke-linejoin="round"/><path d="M11.9 7.4L15.3 6.4L10.8 13.2Z" fill="#8fd0f0" stroke="#111" stroke-width="1.1" stroke-linejoin="round"/></g><g transform="translate(277,406)"><path d="M0.8 2.6L8 4.6L10.8 13.2L3.2 11.6Z" fill="#fff" stroke="#111" stroke-width="1.05" stroke-linejoin="round"/><path d="M8 4.6L9.4 0.6L14.2 2.3L11.9 7.4Z" fill="#8fd0f0" stroke="#111" stroke-width="1.05" stroke-linejoin="round"/><path d="M11.9 7.4L15.3 6.4L10.8 13.2Z" fill="#8fd0f0" stroke="#111" stroke-width="1.1" stroke-linejoin="round"/></g><g transform="translate(277,431)"><path d="M0.8 2.6L8 4.6L10.8 13.2L3.2 11.6Z" fill="#fff" stroke="#111" stroke-width="1.05" stroke-linejoin="round"/><path d="M8 4.6L9.4 0.6L14.2 2.3L11.9 7.4Z" fill="#8fd0f0" stroke="#111" stroke-width="1.05" stroke-linejoin="round"/><path d="M11.9 7.4L15.3 6.4L10.8 13.2Z" fill="#8fd0f0" stroke="#111" stroke-width="1.1" stroke-linejoin="round"/></g><g transform="translate(277,456)"><path d="M0.8 2.6L8 4.6L10.8 13.2L3.2 11.6Z" fill="#fff" stroke="#111" stroke-width="1.05" stroke-linejoin="round"/><path d="M8 4.6L9.4 0.6L14.2 2.3L11.9 7.4Z" fill="#8fd0f0" stroke="#111" stroke-width="1.05" stroke-linejoin="round"/><path d="M11.9 7.4L15.3 6.4L10.8 13.2Z" fill="#8fd0f0" stroke="#111" stroke-width="1.1" stroke-linejoin="round"/></g><path d="M11.8 156.5L20.8 159.2L18 171.2L8.6 167Z" fill="#9ad8f2" stroke="#111" stroke-width="1.3" stroke-linejoin="round"/><path d="M19 160.5L16.6 169.8" stroke="#f0f0f0" stroke-width="1.3"/><path d="M12.5 158L10 166" stroke="#5aa8cc" stroke-width="0.8"/><rect x="27" y="160" width="1.2" height="9" fill="#f0a020"/><ellipse cx="54.7" cy="104.7" rx="5.6" ry="5" fill="#111"/><rect x="49.1" y="101.5" width="11.2" height="3.2" fill="#111"/><ellipse cx="54.7" cy="104.7" rx="4.2" ry="3.6" fill="#fff"/><ellipse cx="54.7" cy="101.5" rx="5.6" ry="5" fill="#111"/><ellipse cx="54.7" cy="101.5" rx="4.4" ry="3.7" fill="#c8007a"/><ellipse cx="44" cy="109.7" rx="5.6" ry="5" fill="#111"/><rect x="38.4" y="106.5" width="11.2" height="3.2" fill="#111"/><ellipse cx="44" cy="109.7" rx="4.2" ry="3.6" fill="#fff"/><ellipse cx="44" cy="106.5" rx="5.6" ry="5" fill="#111"/><ellipse cx="44" cy="106.5" rx="4.4" ry="3.7" fill="#1a9ee0"/><ellipse cx="62.3" cy="114.2" rx="5.6" ry="5" fill="#111"/><rect x="56.699999999999996" y="111" width="11.2" height="3.2" fill="#111"/><ellipse cx="62.3" cy="114.2" rx="4.2" ry="3.6" fill="#fff"/><ellipse cx="62.3" cy="111" rx="5.6" ry="5" fill="#111"/><ellipse cx="62.3" cy="111" rx="4.4" ry="3.7" fill="#8a8a8a"/><ellipse cx="51" cy="120.7" rx="5.6" ry="5" fill="#111"/><rect x="45.4" y="117.5" width="11.2" height="3.2" fill="#111"/><ellipse cx="51" cy="120.7" rx="4.2" ry="3.6" fill="#fff"/><ellipse cx="51" cy="117.5" rx="5.6" ry="5" fill="#111"/><ellipse cx="51" cy="117.5" rx="4.4" ry="3.7" fill="#f5e400"/><circle cx="84" cy="109" r="8.2" fill="#3a8aa8"/><path d="M80.8 106.3H87.2L84 112Z" fill="#fff"/><path d="M197 98.5L208 98L211 111L205 123Z" fill="#fff" stroke="#111" stroke-width="1.3" stroke-linejoin="round"/><path d="M207 104L213.5 106L204 124.5Z" fill="#b0dff2" stroke="#111" stroke-width="1.3" stroke-linejoin="round"/><path d="M188.5 96.8L197.5 98.2L197.8 100.3L207 102L203 125L184.8 120Z" fill="#b0dff2" stroke="#111" stroke-width="1.7" stroke-linejoin="round"/><path d="M276 103L284 101.5L282 108L285 114L279 115Z" fill="#fff" stroke="#222" stroke-width="0.8"/><circle cx="274.6" cy="104.8" r="3.2" fill="#1a9ee0" stroke="#444" stroke-width="0.6"/><path d="M273.0 104.8L274.20000000000005 106.1L276.3 103.5" fill="none" stroke="#fff" stroke-width="0.9"/><circle cx="274.9" cy="112.8" r="3.2" fill="#1a9ee0" stroke="#444" stroke-width="0.6"/><path d="M273.29999999999995 112.8L274.5 114.1L276.59999999999997 111.5" fill="none" stroke="#fff" stroke-width="0.9"/><circle cx="283.3" cy="109.9" r="3.2" fill="#1a9ee0" stroke="#444" stroke-width="0.6"/><path d="M281.7 109.9L282.90000000000003 111.2L285.0 108.60000000000001" fill="none" stroke="#fff" stroke-width="0.9"/><path d="M303.2 96.8L316 98.5L317.5 100L320.5 100.6L312.5 125.2L295.8 119.8Z" fill="#fff" stroke="#111" stroke-width="1.7" stroke-linejoin="round"/><path d="M307.6 104L307 111.5Q304 114.5 301.5 116M307 111.5Q310.5 112.8 313.8 113.2" fill="none" stroke="#d0107a" stroke-width="1.8" stroke-linecap="round"/><circle cx="307.6" cy="104.3" r="1.1" fill="#d0107a"/><circle cx="301.8" cy="116" r="1.1" fill="#d0107a"/><circle cx="313.6" cy="113.2" r="1.1" fill="#d0107a"/><path d="M402.5 102.8L423.4 96.5L427 108L404.5 118.5Z" fill="#fff" stroke="#111" stroke-width="1.6" stroke-linejoin="round"/><path d="M404.5 104L412 102L412.5 107L405.2 109Z" fill="#fff"/><path d="M414 101L422 98.5L423.5 103L414.8 105.5Z" fill="#9ad8f2"/><path d="M405.5 111L413 109L413.5 113.2L406.3 115.5Z" fill="#9ad8f2"/><path d="M403.5 110L414 107M413 101L414.5 114" stroke="#111" stroke-width="1.2"/><path d="M414 107.5Q418 105 421 110L424 108Q428 112 431 118Q433 124 427 125.5Q421 126 417 120Z" fill="#fff" stroke="#111" stroke-width="1.4" stroke-linejoin="round"/><path d="M416 109L422 117M418 107.3L423.5 115M420.5 106L425 113" stroke="#111" stroke-width="1"/><path d="M511.5 102.8L532.8 96.5L537.5 112L513.2 118.4Z" fill="#fff" stroke="#111" stroke-width="1.6" stroke-linejoin="round"/><path d="M514 104.5L521.5 102.5L522 107.5L514.8 109.5Z" fill="#1a9ee0"/><path d="M523.5 101.5L531.5 99L532.5 104L524.5 106Z" fill="#c8007a"/><path d="M515 111L522.5 109L523 114L515.5 116Z" fill="#f5e400"/><path d="M525 107.5L533 105.5L533.5 107.5L525.3 109.5Z" fill="#111"/><circle cx="530" cy="114.5" r="5.5" fill="#b8b8bc" fill-opacity="0.6" stroke="#111" stroke-width="1.5"/><path d="M534 118.5L540 124.5" stroke="#111" stroke-width="2.6" stroke-linecap="round"/><path d="M525 114L535 111.5" stroke="#111" stroke-width="1"/><path d="M623.6999999999999 97.05L642.4 98.75L637.3 116.35000000000001L620.0 111.55Z" fill="#9a9a9f" stroke="#111" stroke-width="1.4" stroke-linejoin="round"/><path d="M626.1 99.89999999999999L644.8000000000001 101.6L639.7 119.2L622.4000000000001 114.39999999999999Z" fill="#f5e400" stroke="#111" stroke-width="1.4" stroke-linejoin="round"/><path d="M628.5 102.75L647.2 104.45L642.1 122.05000000000001L624.8000000000001 117.25Z" fill="#c8007a" stroke="#111" stroke-width="1.4" stroke-linejoin="round"/><path d="M630.9 105.6L649.6 107.3L644.5 124.9L627.2 120.1Z" fill="#009fe0" stroke="#111" stroke-width="1.6" stroke-linejoin="round"/><path d="M729.6 107.7L740.6 105.1L745.4 121.7L732.7 125.2Z" fill="#e0e0e2" stroke="#2a2a2a" stroke-width="1.5" stroke-linejoin="round"/><path d="M739.2 100.3L752.4 96.4L758.5 114.7L748 118.2Q746 113 742 111Z" fill="#e0e0e2" stroke="#2a2a2a" stroke-width="1.5" stroke-linejoin="round"/><path d="M743 112L746 117.5L751.5 114" fill="none" stroke="#2a2a2a" stroke-width="1"/><path d="M841 98.5L865 100.5L866 111L841 107.5Z" fill="#5a5a5e" stroke="#2a2a2a" stroke-width="1.3" stroke-linejoin="round"/><path d="M842 102L865 103.8M842 105L865 107" stroke="#8a8a8e" stroke-width="0.9"/><ellipse cx="865.5" cy="105.8" rx="2.6" ry="5.6" fill="#dcdcde" stroke="#2a2a2a" stroke-width="1.3"/><ellipse cx="865.3" cy="105.8" rx="0.8" ry="1.8" fill="#2a2a2a"/><path d="M838.4 116.3L844.5 107.8L861.5 110.5L856 122.5Z" fill="#dcdcde" stroke="#2a2a2a" stroke-width="1.3" stroke-linejoin="round"/><path d="M856 122.5L861.5 110.5L864 113L862 124Z" fill="#dcdcde" stroke="#2a2a2a" stroke-width="1" stroke-linejoin="round"/><ellipse cx="863.8" cy="118.5" rx="2.7" ry="5.6" fill="#dcdcde" stroke="#2a2a2a" stroke-width="1.3"/><ellipse cx="863.6" cy="118.5" rx="0.8" ry="2" fill="#2a2a2a"/><circle cx="960.3" cy="86.1" r="6.6" fill="#fff" stroke="#1aa0e0" stroke-width="1.6"/><path d="M958.5 82.8L963.5 86.1L958.5 89.4Z" fill="#1aa0e0"/><path d="M947.6 117.1L959.7 101.3L976.7 104.8L966 123.4Z" fill="#fff" stroke="#111" stroke-width="1.5" stroke-linejoin="round"/><path d="M947 107L952.5 109.5L954.5 106.5L962.5 116" fill="none" stroke="#1aa0e0" stroke-width="2.2" stroke-linejoin="miter"/><path d="M953.5 100L956.8 106.5L959 103.5L962.8 115" fill="none" stroke="#c8007a" stroke-width="2.2" stroke-linejoin="miter"/><path d="M962.5 97L960.5 104.5L964 104L963.3 115" fill="none" stroke="#f5e400" stroke-width="2.2" stroke-linejoin="miter"/><path d="M973.5 100L968.5 102.5L970 105.5L965 111.5" fill="none" stroke="#111" stroke-width="1.8"/><path d="M1064.4 96.8L1068 98L1072 97.5L1078 98L1080.5 99.5L1085 98.6L1077.1 125.2L1073 123.5L1069 124L1064 122.5L1061 120.5L1057 120.4Z" fill="#e0e0e2" stroke="#222" stroke-width="1.5" stroke-linejoin="round"/><path d="M1068.8 101L1063.5 119M1078.3 102.5L1072.2 120" stroke="#555" stroke-width="1.2"/><path d="M1165.5 98.5L1182 96.8L1186 110L1178 120L1172 122Z" fill="#fff" stroke="#111" stroke-width="1.5" stroke-linejoin="round"/><path d="M1179.5 107.5Q1172 106.5 1169.5 113L1166 115L1170 118.5L1171.5 115.5Q1173 111 1179.5 111Z" fill="#8fd0f0" stroke="#111" stroke-width="1.1" stroke-linejoin="round"/><circle cx="1184.8" cy="115.5" r="9" fill="#fff" stroke="#111" stroke-width="1.7"/><path d="M1184.8 115.5L1184.8 107.3A8.2 8.2 0 0 0 1180 122.5Z" fill="#7cc8ec"/><path d="M1184.8 108V115.5L1190 116.5" fill="none" stroke="#111" stroke-width="1.6"/><path d="M1207.5 107H1214.5L1211 112.5Z" fill="#3a3a40"/><path d="M1111.5 16.5L1116 20L1120.5 16.5M1111.5 20.5L1116 24L1120.5 20.5" fill="none" stroke="#e8e8e8" stroke-width="1.2"/><rect x="1142" y="8" width="1.2" height="24" fill="#111"/><rect x="1163.3" y="12.2" width="3.6" height="15.2" fill="#c0c0c0" stroke="#111" stroke-width="0.9"/><path d="M1158.5 16.5L1161.5 20L1158.5 23.5M1171.5 16.5L1168.5 20L1171.5 23.5" fill="none" stroke="#111" stroke-width="1.2"/><rect x="1181.5" y="13.5" width="3" height="12.5" fill="#fff" stroke="#111" stroke-width="0.9"/><path d="M1185.5 14L1193 13.5L1193 26.5L1185.5 24Z" fill="#b0b0b0" stroke="#111" stroke-width="0.9"/><rect x="1193.8" y="13.5" width="3" height="13" fill="#fff" stroke="#111" stroke-width="0.9"/><path d="M1206 19.5L1218.5 16.5L1220 24.5L1207 27.5Z" fill="#fff" stroke="#111" stroke-width="0.9"/><path d="M1210.5 16L1218 13.5L1220.5 19L1212.5 21.5Z" fill="#b0b0b0" stroke="#111" stroke-width="0.9"/><path d="M1097 48L1108.5 55L1097 62Z" fill="#a8def5" stroke="#111" stroke-width="1.6" stroke-linejoin="round"/><path d="M1162.5 51L1171 55L1162.5 59Z" fill="#c9cbd4"/><path d="M1162 59L1166 57" stroke="#e8e8f0" stroke-width="0.8"/><path d="M1202.5 58.8H1211V50.2" fill="none" stroke="#f0f0f0" stroke-width="1"/></svg>
<div class="t" style="left:228.5px;top:103px;color:#1a1a1a;font-size:12.5px">1</div>
<div class="t" style="left:333.5px;top:103px;color:#1a1a1a;font-size:12.5px">16</div>
<div class="t" style="left:446.5px;top:103px;color:#1a1a1a;font-size:12.5px">4</div>
<div class="t" style="left:555.5px;top:103px;color:#1a1a1a;font-size:12.5px">8</div>
<div class="t" style="left:664.5px;top:103px;color:#1a1a1a;font-size:12.5px">0</div>
<div class="t" style="left:882.5px;top:103px;color:#1a1a1a;font-size:12.5px">0</div>
</body></html>
